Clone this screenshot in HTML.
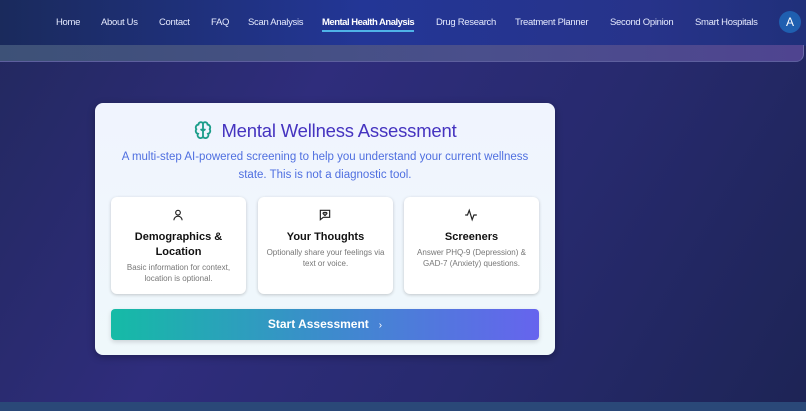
<!DOCTYPE html><html><head><style>
*{margin:0;padding:0;box-sizing:border-box}
body{width:806px;height:411px;overflow:hidden;font-family:"Liberation Sans",sans-serif;background:linear-gradient(120deg,#22285e 0%,#2f2d7c 35%,#272a6e 65%,#1d2455 100%);position:relative}
.hdr{position:absolute;left:0;top:0;width:806px;height:46px;background:linear-gradient(90deg,#1a2a5c,#233696 45%,#27338a 80%,#20307a)}
.bar{position:absolute;left:0;top:45px;width:804px;height:17px;background:linear-gradient(90deg,#3d5177,#4a4f8c 60%,#4f4490);border-radius:0 0 8px 0;border-right:1px solid #6a6aa8;border-bottom:1px solid #5d5f9e}
.nav a{position:absolute;top:17px;color:#e6ebff;font-size:9.5px;letter-spacing:-0.3px;text-decoration:none;white-space:nowrap}
.nav a.act{font-weight:bold;color:#fff;letter-spacing:-0.5px}
.nav a.act:after{content:"";position:absolute;left:0;right:0;top:13px;height:2px;background:#4fb3e8}
.av{position:absolute;left:779px;top:11px;width:22px;height:22px;border-radius:50%;background:#1f5fb0;color:#fff;font-size:12px;text-align:center;line-height:22px}
.foot{position:absolute;left:0;top:402px;width:806px;height:9px;background:#2a4878}
.card{position:absolute;left:95px;top:103px;width:460px;height:252px;border-radius:8px;background:linear-gradient(180deg,#f0f4fe,#eff8fb);box-shadow:0 2px 8px rgba(0,0,0,.3)}
.ttl{position:absolute;width:460px;top:120px;text-align:center;font-size:18.5px;color:#4533c0;letter-spacing:-0.2px}
.sub{position:absolute;left:95px;width:460px;top:148px;text-align:center;font-size:11.5px;line-height:18px;color:#4f6fe0}
.box{position:absolute;top:197px;width:135px;height:97px;background:#fff;border-radius:6px;box-shadow:0 1px 3px rgba(0,0,0,.2);text-align:center}
.box h3{font-size:11px;color:#111;margin-top:33px;line-height:15px;font-weight:bold}
.box p{font-size:8px;color:#777;line-height:11px;margin-top:2px;padding:0 8px}
.box svg{position:absolute;left:60px;top:11px}
.btn{position:absolute;left:111px;top:309px;width:428px;height:31px;border-radius:4px;background:linear-gradient(90deg,#15bba6,#3c8ccc 50%,#6664ee);color:#fff;font-weight:bold;font-size:12px;text-align:center;line-height:31px;box-shadow:0 2px 5px rgba(0,0,0,.15)}
</style></head><body>
<div class="hdr"></div><div class="bar"></div>
<div class="nav">
<a style="left:56px">Home</a><a style="left:101px">About Us</a><a style="left:159px">Contact</a><a style="left:211px">FAQ</a><a style="left:248px">Scan Analysis</a><a class="act" style="left:322px">Mental Health Analysis</a><a style="left:436px">Drug Research</a><a style="left:515px">Treatment Planner</a><a style="left:610px">Second Opinion</a><a style="left:695px">Smart Hospitals</a>
</div>
<div class="av">A</div>
<div class="card"></div>
<div class="ttl" style="left:95px"><svg width="20" height="20" viewBox="0 0 24 24" fill="none" stroke="#1b9d8a" stroke-width="2.2" style="vertical-align:-3px;margin-right:8px"><path d="M12 4a3 3 0 0 0-5.5 1.5A3.5 3.5 0 0 0 4 11a3.5 3.5 0 0 0 2 5.5A3 3 0 0 0 12 20zM12 4a3 3 0 0 1 5.5 1.5A3.5 3.5 0 0 1 20 11a3.5 3.5 0 0 1-2 5.5A3 3 0 0 1 12 20M12 13l-3-2M12 13l3-2"/></svg>Mental Wellness Assessment</div>
<div class="sub">A multi-step AI-powered screening to help you understand your current wellness<br>state. This is not a diagnostic tool.</div>
<div class="box" style="left:111px"><svg width="14" height="14" viewBox="0 0 24 24" fill="none" stroke="#222" stroke-width="2"><circle cx="12" cy="8" r="4"/><path d="M5 21a7 7 0 0 1 14 0"/></svg><h3>Demographics &amp;<br>Location</h3><p>Basic information for context, location is optional.</p></div>
<div class="box" style="left:258px"><svg width="14" height="14" viewBox="0 0 24 24" fill="none" stroke="#222" stroke-width="2"><path d="M4 4h16v12H9l-5 4z"/><path d="M12 13l-3-3a1.5 1.5 0 0 1 3-1.5 1.5 1.5 0 0 1 3 1.5z"/></svg><h3>Your Thoughts</h3><p>Optionally share your feelings via text or voice.</p></div>
<div class="box" style="left:404px"><svg width="14" height="14" viewBox="0 0 24 24" fill="none" stroke="#222" stroke-width="2"><path d="M2 12h4l3-8 5 16 3-8h5"/></svg><h3>Screeners</h3><p>Answer PHQ-9 (Depression) &amp; GAD-7 (Anxiety) questions.</p></div>
<div class="btn">Start Assessment &nbsp;&nbsp;<span style="font-weight:normal;font-size:10px">›</span></div>
<div class="foot"></div>
</body></html>
